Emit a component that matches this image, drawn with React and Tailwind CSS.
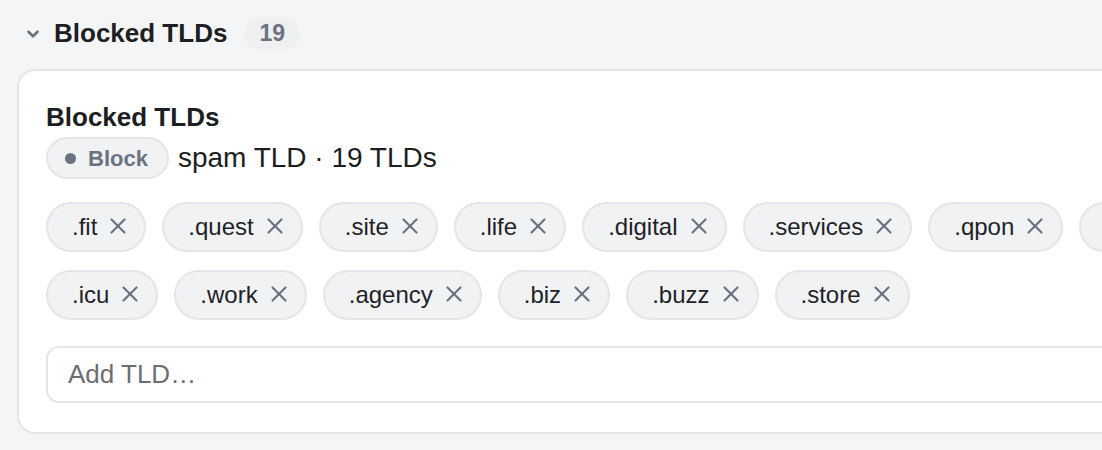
import React from 'react';
import { ChevronDown, X } from 'lucide-react';

const tlds = [
  'fit', 'quest', 'site', 'life', 'digital', 'services', 'qpon',
  'top', 'xyz', 'click', 'loan', 'rest', 'cfd',
  'icu', 'work', 'agency', 'biz', 'buzz', 'store',
];

function TldChip({ name }) {
  return (
    <span className="flex h-[50px] items-center gap-[8px] rounded-full border-2 border-[#e4e5e8] bg-[#f1f2f4] pl-[24px] pr-[13px] text-[24px] text-[#1f2328]">
      .{name}
      <X size={26} strokeWidth={2} className="-mt-[3px] text-[#6b7280]" />
    </span>
  );
}

export default function App() {
  return (
    <div
      className="h-[450px] w-full overflow-hidden bg-[#f4f5f7]"
      style={{ fontFamily: '"Liberation Sans", Arial, sans-serif' }}
    >
      <div className="w-[1960px] pl-[17px]">
        {/* section header */}
        <div className="flex h-[69px] items-center pl-[7px] pb-[2px]">
          <ChevronDown size={18} strokeWidth={3.5} className="text-[#6b7280]" />
          <h2 className="ml-[12px] text-[26px] font-bold text-[#1c1e21]">Blocked TLDs</h2>
          <span className="ml-[17px] flex h-[32px] items-center rounded-full bg-[#eef0f2] px-[15px] text-[23px] font-bold text-[#6b7280]">
            19
          </span>
        </div>

        <div className="rounded-[18px] border-2 border-[#e4e5e8] bg-white px-[27px] pt-[27px] pb-[29px]">
          <h3 className="text-[26px] font-bold leading-[38px] text-[#1c1e21]">Blocked TLDs</h3>
          <div className="mt-[1px] flex items-center gap-[9px]">
            <span className="flex h-[42px] items-center gap-[12px] rounded-full border-2 border-[#e4e5e8] bg-[#f1f2f4] pl-[17px] pr-[19px] text-[22px] font-bold text-[#6b7280]">
              <span className="h-[11px] w-[11px] rounded-full bg-[#6b7280]" />
              Block
            </span>
            <span className="text-[28px] text-[#1c1e21]">spam TLD · 19 TLDs</span>
          </div>

          <div className="mt-[23px] flex flex-wrap gap-x-[16px] gap-y-[18px]">
            {tlds.map((t) => (
              <TldChip key={t} name={t} />
            ))}
          </div>

          <input
            placeholder="Add TLD…"
            className="mt-[26px] h-[57px] w-full rounded-[13px] border-2 border-[#e4e5e8] px-[20px] text-[26px] text-[#1c1e21] placeholder:text-[#6b6e73] outline-none"
          />
        </div>
      </div>
    </div>
  );
}
